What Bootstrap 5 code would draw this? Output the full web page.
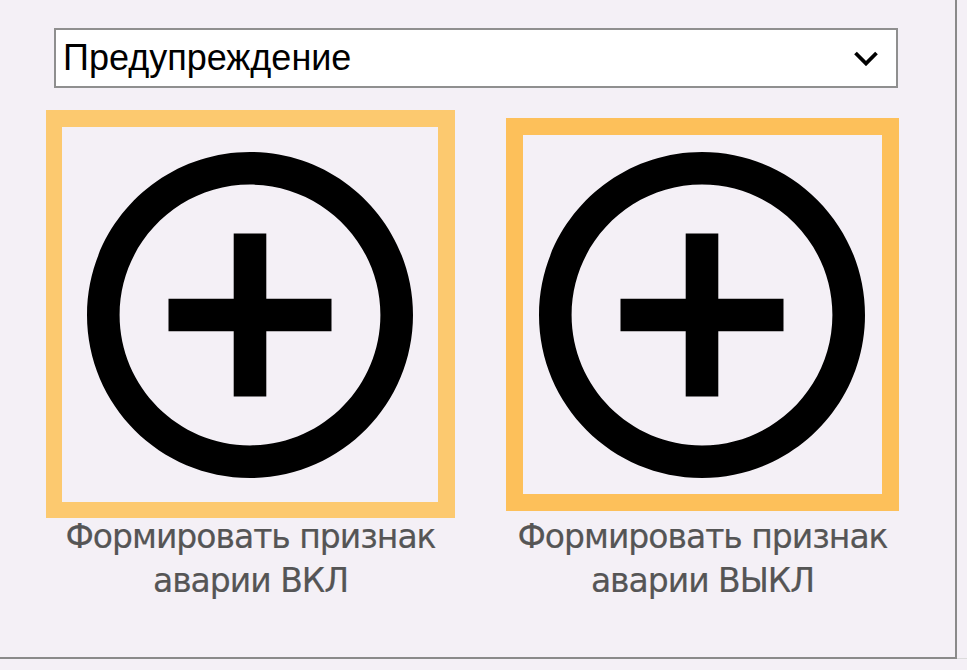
<!DOCTYPE html>
<html lang="ru">
<head>
<meta charset="utf-8">
<title>Аварии</title>
<link href="https://cdn.jsdelivr.net/npm/bootstrap@5.3.0/dist/css/bootstrap.min.css" rel="stylesheet">
<style>
html,body{height:100%;margin:0}
body{background:#f4f0f6;overflow:hidden}
.stage{height:659px;border-bottom:1px solid #dcdcdc}
.pane{width:957px;height:659px;border-right:2px solid #8a8a8a;border-bottom:2px solid #8a8a8a;padding:28px 57px 0 46px}
.pick{width:844px;height:60px;margin-left:8px;margin-bottom:22px;padding:0 7px;border:2px solid #8f8f8f;background-color:#fff;color:#000;font:36px/56px "Liberation Sans",Arial,sans-serif;display:flex;align-items:center;justify-content:space-between}
.pick svg{width:24px;height:15px;margin-right:11px;flex:none}
.tiles{gap:43px}
.tile{width:409px;flex:none}
.framebox{width:409px;height:409px}
.frame-on{width:409px;height:408px;border-style:solid;border-color:#fcc96f;border-width:17px 17px 16px 16px;padding-left:25px}
.frame-off{width:393px;height:393px;border:17px solid #fdc05a;padding-left:16px}
.frame-on svg,.frame-off svg{display:block;width:326px;height:326px;flex:none}
.cap{font:33px/44px "DejaVu Sans",Verdana,sans-serif;color:#555;text-align:center;letter-spacing:-1px;margin-top:-4px;-webkit-text-stroke:.2px #555}
</style>
</head>
<body>
<div class="stage">
<div class="pane">
  <div class="pick"><span>Предупреждение</span>
    <svg viewBox="0 0 24 15" aria-hidden="true"><path d="M1.500 2L12 12.500 22.500 2" fill="none" stroke="#000" stroke-width="3.800"/></svg>
  </div>
  <div class="d-flex tiles">
    <div class="tile">
      <div class="framebox d-flex align-items-start justify-content-center">
        <div class="frame-on d-flex align-items-center">
          <svg viewBox="2 2 20 20" aria-hidden="true"><path d="M13 7h-2v4H7v2h4v4h2v-4h4v-2h-4V7zm-1-5C6.48 2 2 6.48 2 12s4.48 10 10 10 10-4.48 10-10S17.52 2 12 2zm0 18c-4.41 0-8-3.59-8-8s3.59-8 8-8 8 3.59 8 8-3.59 8-8 8z"/></svg>
        </div>
      </div>
      <div class="cap">Формировать признак<br>аварии ВКЛ</div>
    </div>
    <div class="tile">
      <div class="framebox d-flex align-items-center justify-content-center">
        <div class="frame-off d-flex align-items-center">
          <svg viewBox="2 2 20 20" aria-hidden="true"><path d="M13 7h-2v4H7v2h4v4h2v-4h4v-2h-4V7zm-1-5C6.48 2 2 6.48 2 12s4.48 10 10 10 10-4.48 10-10S17.52 2 12 2zm0 18c-4.41 0-8-3.59-8-8s3.59-8 8-8 8 3.59 8 8-3.59 8-8 8z"/></svg>
        </div>
      </div>
      <div class="cap">Формировать признак<br>аварии ВЫКЛ</div>
    </div>
  </div>
</div>
</div>
<script src="https://cdn.jsdelivr.net/npm/bootstrap@5.3.0/dist/js/bootstrap.bundle.min.js"></script>
</body>
</html>
